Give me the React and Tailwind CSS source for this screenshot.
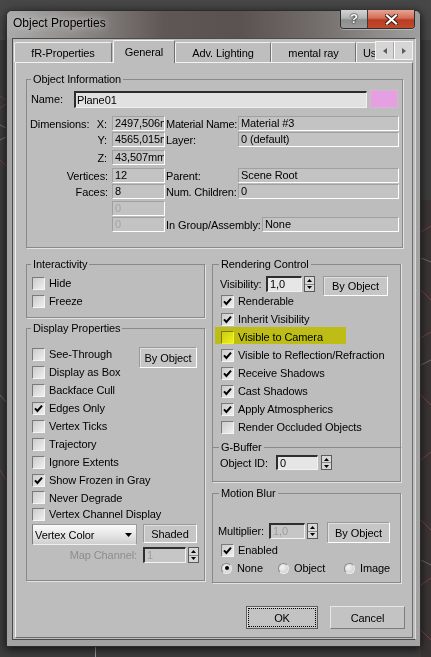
import React from "react";

const font = "font-['Liberation_Sans',Arial,sans-serif]";

function Check({ checked }) {
  return (
    <span className="flex h-[13px] w-[13px] shrink-0 items-center justify-center border border-t-[#7a7a7a] border-l-[#7a7a7a] border-b-[#f4f4f4] border-r-[#f4f4f4] bg-[linear-gradient(135deg,#cbcbcb_0%,#efefef_100%)]">
      {checked && (
        <svg width="9" height="9" viewBox="0 0 9 9">
          <path d="M1 4.3 L3.4 7 L8 1.6" fill="none" stroke="#000" strokeWidth="2" />
        </svg>
      )}
    </span>
  );
}

function CheckRow({ checked, label, cls }) {
  return (
    <div className={`flex items-center gap-[4px] whitespace-nowrap ${cls}`}>
      <Check checked={checked} />
      <span>{label}</span>
    </div>
  );
}

function Arrows({ cls }) {
  return (
    <span className={`flex w-[11px] shrink-0 flex-col border border-[#5a5a5a] bg-[#d8d8d8] ${cls}`}>
      <span className="flex flex-1 items-center justify-center border-b border-[#8a8a8a]">
        <svg width="5" height="3" viewBox="0 0 5 3">
          <path d="M2.5 0 L5 3 L0 3 Z" fill="#000" />
        </svg>
      </span>
      <span className="flex flex-1 items-center justify-center">
        <svg width="5" height="3" viewBox="0 0 5 3">
          <path d="M0 0 L5 0 L2.5 3 Z" fill="#000" />
        </svg>
      </span>
    </span>
  );
}

function SpinField({ children, cls, disabled }) {
  return (
    <span
      className={`flex shrink-0 items-center overflow-hidden whitespace-nowrap border-t-2 border-l-2 border-b border-r border-t-[#2e2e2e] border-l-[#2e2e2e] border-b-[#f2f2f2] border-r-[#f2f2f2] pl-[2px] leading-none ${
        disabled ? "bg-[#c6c6c6] text-[#9c9c9c]" : "bg-[#e6e6e6] text-black"
      } ${cls}`}
    >
      {children}
    </span>
  );
}

function Btn({ children, cls }) {
  return (
    <span
      className={`flex shrink-0 items-center justify-center border border-t-[#9a9a9a] border-l-[#9a9a9a] border-b-white border-r-white bg-[#c6c6c6] shadow-[inset_1px_1px_0_#e0e0e0] ${cls}`}
    >
      {children}
    </span>
  );
}

function Radio({ on }) {
  return (
    <span className="flex h-[11px] w-[11px] shrink-0 items-center justify-center rounded-full border border-t-[#8a8a8a] border-l-[#8a8a8a] border-b-[#ececec] border-r-[#ececec] bg-[radial-gradient(circle_at_35%_35%,#f6f6f6,#c6c6c6)]">
      {on && <span className="h-[4px] w-[4px] rounded-full bg-black" />}
    </span>
  );
}

function Group({ title, cls, lcls, children }) {
  return (
    <fieldset className={`border border-[#898989] ${cls}`}>
      <legend className={`px-[2px] text-[11px] leading-[14px] ${lcls}`}>{title}</legend>
      {children}
    </fieldset>
  );
}

function InfoField({ children, cls, dim }) {
  return (
    <div
      className={`flex h-[15px] shrink-0 items-center overflow-hidden whitespace-nowrap border border-t-[#a0a0a0] border-l-[#a0a0a0] border-b-white border-r-white bg-[#c3c3c3] pl-[2px] leading-none ${
        dim ? "text-[#a4a4a4]" : "text-black"
      } ${cls}`}
    >
      {children}
    </div>
  );
}

function Tab({ children, cls }) {
  return (
    <div
      className={`mb-px flex h-[20px] shrink-0 items-center justify-center whitespace-nowrap rounded-t-[2px] border-t border-l border-r border-t-[#f0f0f0] border-l-[#f0f0f0] border-r-[#727272] bg-[#bebebe] ${cls}`}
    >
      {children}
    </div>
  );
}

function Backdrop() {
  return (
    <svg className="absolute left-0 top-0" width="431" height="657" viewBox="0 0 431 657">
      <rect x="0" y="0" width="431" height="657" fill="#3d3d3d" />
      <rect x="0" y="0" width="431" height="40" fill="#474747" />
      <rect x="421" y="200" width="10" height="457" fill="#3b3434" />
      <g stroke="#8c4646" strokeWidth="0.8" fill="none">
        <line x1="0" y1="96" x2="6" y2="100" />
        <line x1="0" y1="108" x2="6" y2="104" />
        <line x1="0" y1="160" x2="6" y2="166" />
        <line x1="0" y1="470" x2="6" y2="480" />
        <line x1="421" y1="232" x2="431" y2="226" />
        <line x1="421" y1="290" x2="431" y2="300" />
        <line x1="421" y1="338" x2="431" y2="332" />
        <line x1="421" y1="395" x2="431" y2="405" />
        <line x1="421" y1="460" x2="431" y2="452" />
        <line x1="421" y1="520" x2="431" y2="530" />
        <line x1="421" y1="585" x2="431" y2="578" />
        <line x1="421" y1="630" x2="431" y2="640" />
      </g>
      <g stroke="#bcbcbc" strokeWidth="0.6" fill="none" opacity="0.7">
        <line x1="0" y1="125" x2="6" y2="128" />
        <line x1="0" y1="140" x2="6" y2="137" />
        <line x1="0" y1="395" x2="6" y2="402" />
        <line x1="421" y1="258" x2="431" y2="262" />
        <line x1="421" y1="365" x2="431" y2="360" />
        <line x1="421" y1="560" x2="431" y2="565" />
      </g>
      <line x1="95.5" y1="646" x2="95.5" y2="657" stroke="#8e9aa6" strokeWidth="1" />
    </svg>
  );
}

export default function App() {
  return (
    <div className={`relative h-[657px] w-[431px] overflow-hidden bg-[#3e3e3e] text-[11px] leading-[14px] tracking-[-0.1px] text-black ${font}`}>
      <Backdrop />
      <div className="relative ml-[6px] mt-[10px] flex h-[637px] w-[415px] flex-col rounded-t-[6px] border border-[#2c2c2c] bg-[#a3a3a3] shadow-[0_2px_10px_rgba(0,0,0,0.75)]">
        {/* title bar */}
        <div className="flex h-[27px] shrink-0 items-start justify-between rounded-t-[5px] bg-[linear-gradient(90deg,#aaaaaa_0%,#8e8a88_17%,#5f5755_38%,#5a5250_56%,#716b69_74%,#8f8c8b_90%,#9f9f9f_100%)]">
          <span className="ml-[6px] mt-[5px] text-[12px] leading-[15px] tracking-normal [text-shadow:0_0_6px_#d4d4d4,0_0_12px_#c4c4c4]">
            Object Properties
          </span>
          <div className="-mt-px mr-[5px] flex h-[19px] rounded-b-[4px] border border-t-0 border-[#2e2e2e] shadow-[0_1px_0_rgba(255,255,255,0.35)]">
            <span className="flex w-[27px] items-center justify-center rounded-bl-[3px] border-r border-[#3a3a3a] bg-[linear-gradient(180deg,#d4d4d4_0%,#b4b4b4_45%,#8e8e8e_55%,#9a9a9a_100%)] pb-px text-[13px] font-bold leading-none text-white [text-shadow:0_0_2px_#000,0_0_1px_#000]">
              ?
            </span>
            <span className="flex w-[46px] items-center justify-center rounded-br-[3px] bg-[linear-gradient(180deg,#e8a495_0%,#d36e58_45%,#b83c22_55%,#c24a2c_100%)]">
              <svg width="13" height="11" viewBox="0 0 13 11">
                <path d="M2 1.5 L11 9.5 M11 1.5 L2 9.5" stroke="#3a1a12" strokeWidth="4" strokeLinecap="square" />
                <path d="M2 1.5 L11 9.5 M11 1.5 L2 9.5" stroke="#ffffff" strokeWidth="2.2" strokeLinecap="square" />
              </svg>
            </span>
          </div>
        </div>

        {/* client */}
        <div className="ml-[5px] mr-[4px] flex h-[602px] flex-col border border-[#4c4c4c] border-r-[#dadada] bg-[#bdbdbd]">
          {/* tabs */}
          <div className="flex h-[23px] shrink-0 items-start">
            <div className="relative z-10 flex h-[24px] w-[362px] items-end overflow-hidden">
              <Tab cls="ml-[1px] w-[98px]">fR-Properties</Tab>
              <div className="ml-[1px] flex h-[23px] w-[62px] shrink-0 items-center justify-center rounded-t-[2px] border-t border-l border-r border-t-[#f4f4f4] border-l-[#f4f4f4] border-r-[#6e6e6e] bg-[#bdbdbd]">
                General
              </div>
              <Tab cls="w-[96px]">Adv. Lighting</Tab>
              <Tab cls="w-[85px]">mental ray</Tab>
              <Tab cls="w-[70px] justify-start pl-[6px]">User Defined</Tab>
            </div>
            <div className="mt-[2px] flex h-[19px] w-[38px] shrink-0 border border-[#f2f2f2] bg-[#d6d6d6]">
              <span className="flex flex-1 items-center justify-center border-r border-[#a8a8a8]">
                <svg width="4" height="6" viewBox="0 0 4 6">
                  <path d="M4 0 L4 6 L0 3 Z" fill="#5a5a5a" />
                </svg>
              </span>
              <span className="flex flex-1 items-center justify-center border-l border-white">
                <svg width="4" height="6" viewBox="0 0 4 6">
                  <path d="M0 0 L0 6 L4 3 Z" fill="#5a5a5a" />
                </svg>
              </span>
            </div>
          </div>

          {/* panel */}
          <div className="ml-[2px] h-[576px] w-[398px] shrink-0 border border-t-[#f2f2f2] border-l-[#f2f2f2] border-b-[#6c6c6c] border-r-[#6c6c6c] pl-[10px]">
            {/* Object Information */}
            <Group title="Object Information" cls="mt-[9px] w-[377px] pb-[15px] shadow-[1px_1px_0_#e2e2e2]" lcls="ml-[4px]">
              <div className="mt-[4px] flex h-[18px] items-end">
                <div className="w-[47px] self-center pl-[4px]">Name:</div>
                <div className="flex h-[17px] w-[293px] items-center border-t-2 border-l-2 border-b border-r border-t-[#2b2b2b] border-l-[#2b2b2b] border-b-[#efefef] border-r-[#efefef] bg-[#e1e1e1] pl-[1px]">
                  Plane01
                </div>
                <div className="ml-[3px] h-[18px] w-[28px] border border-[#d7b4d3] bg-[#e69fe1]" />
              </div>

              <div className="mt-[8px] flex h-[15px] items-center">
                <div className="flex w-[85px] justify-between pl-[3px] pr-[5px]">
                  <span>Dimensions:</span>
                  <span>X:</span>
                </div>
                <InfoField cls="w-[53px]">2497,506mm</InfoField>
                <div className="w-[73px] whitespace-nowrap pl-[1px] tracking-[-0.25px]">Material Name:</div>
                <InfoField cls="w-[161px]">Material #3</InfoField>
              </div>

              <div className="mt-[1px] flex h-[15px] items-center">
                <div className="w-[85px] pr-[5px] text-right">Y:</div>
                <InfoField cls="w-[53px]">4565,015mm</InfoField>
                <div className="w-[73px] pl-[1px]">Layer:</div>
                <InfoField cls="w-[161px]">0 (default)</InfoField>
              </div>

              <div className="mt-[3px] flex h-[15px] items-center">
                <div className="w-[85px] pr-[5px] text-right">Z:</div>
                <InfoField cls="w-[53px]">43,507mm</InfoField>
              </div>

              <div className="mt-[3px] flex h-[15px] items-center">
                <div className="w-[85px] pr-[4px] text-right">Vertices:</div>
                <InfoField cls="w-[53px]">12</InfoField>
                <div className="w-[73px] pl-[1px]">Parent:</div>
                <InfoField cls="w-[161px]">Scene Root</InfoField>
              </div>

              <div className="mt-[1px] flex h-[15px] items-center">
                <div className="w-[85px] pr-[4px] text-right">Faces:</div>
                <InfoField cls="w-[53px]">8</InfoField>
                <div className="w-[73px] whitespace-nowrap pl-[1px] tracking-[-0.2px]">Num. Children:</div>
                <InfoField cls="w-[161px]">0</InfoField>
              </div>

              <div className="mt-[2px] flex h-[15px] items-center">
                <div className="w-[85px]" />
                <InfoField cls="w-[53px]" dim>
                  0
                </InfoField>
              </div>

              <div className="mt-[1px] flex h-[15px] items-center">
                <div className="w-[85px]" />
                <InfoField cls="w-[53px]" dim>
                  0
                </InfoField>
                <div className="w-[97px] whitespace-nowrap pl-[1px]">In Group/Assembly:</div>
                <InfoField cls="w-[137px]">None</InfoField>
              </div>
            </Group>

            {/* columns */}
            <div className="mt-[9px] flex items-start gap-[7px]">
              {/* left */}
              <div className="flex w-[179px] flex-col">
                <Group title="Interactivity" cls="w-[179px] pb-[7px] pl-[5px] shadow-[1px_1px_0_#e2e2e2]" lcls="-ml-px">
                  <CheckRow cls="mt-[3px] h-[18px]" label="Hide" />
                  <CheckRow cls="h-[18px]" label="Freeze" />
                </Group>

                <Group title="Display Properties" cls="mt-[3px] w-[179px] pb-[17px] pl-[5px] shadow-[1px_1px_0_#e2e2e2]" lcls="-ml-px">
                  <div className="mt-[10px] flex h-[18px] items-start justify-between pr-[7px]">
                    <CheckRow cls="h-[18px]" label="See-Through" />
                    <Btn cls="mt-[2px] h-[21px] w-[58px]">By Object</Btn>
                  </div>
                  <CheckRow cls="h-[18px]" label="Display as Box" />
                  <CheckRow cls="h-[18px]" label="Backface Cull" />
                  <CheckRow cls="h-[18px]" label="Edges Only" checked />
                  <CheckRow cls="h-[18px]" label="Vertex Ticks" />
                  <CheckRow cls="h-[18px]" label="Trajectory" />
                  <CheckRow cls="h-[18px]" label="Ignore Extents" />
                  <CheckRow cls="h-[18px]" label="Show Frozen in Gray" checked />
                  <CheckRow cls="h-[17px]" label="Never Degrade" />
                  <CheckRow cls="h-[16px]" label="Vertex Channel Display" />

                  <div className="mt-[2px] flex h-[21px] items-start">
                    <div className="flex h-[21px] w-[105px] items-center justify-between border border-t-[#9c9c9c] border-l-[#7a7a7a] border-b-[#f0f0f0] border-r-[#9a9a9a] bg-[linear-gradient(180deg,#fbfbfb_0%,#e6e6e6_50%,#cfcfcf_100%)] pl-[2px] pr-[4px]">
                      <span>Vertex Color</span>
                      <svg width="7" height="4" viewBox="0 0 7 4">
                        <path d="M0 0 L7 0 L3.5 4 Z" fill="#000" />
                      </svg>
                    </div>
                    <Btn cls="ml-[6px] h-[19px] w-[54px]">Shaded</Btn>
                  </div>

                  <div className="mt-[2px] flex h-[16px] items-center">
                    <div className="w-[105px] text-right text-[#8d8d8d]">Map Channel:</div>
                    <SpinField cls="ml-[6px] h-[16px] w-[43px]" disabled>
                      1
                    </SpinField>
                    <Arrows cls="ml-[2px] h-[16px]" />
                  </div>
                </Group>
              </div>

              {/* right */}
              <div className="flex w-[189px] flex-col">
                <Group title="Rendering Control" cls="w-[189px] border-b-0 pb-[11px] pl-[7px] shadow-[1px_0_0_#e2e2e2]" lcls="-ml-px">
                  <div className="mt-[5px] flex h-[16px] items-start">
                    <span className="flex h-[16px] w-[46px] items-center">Visibility:</span>
                    <SpinField cls="h-[16px] w-[36px]">1,0</SpinField>
                    <Arrows cls="ml-[2px] h-[16px]" />
                    <Btn cls="ml-[8px] h-[20px] w-[65px]">By Object</Btn>
                  </div>
                  <CheckRow cls="ml-[1px] h-[18px]" label="Renderable" checked />
                  <CheckRow cls="ml-[1px] h-[18px]" label="Inherit Visibility" checked />
                  <div className="relative h-[18px]">
                    <CheckRow cls="ml-[1px] h-[18px]" label="Visible to Camera" />
                    <span className="absolute left-[-5px] top-[-1px] h-[17px] w-[131px] bg-[#ffff1c] mix-blend-multiply" />
                  </div>
                  <CheckRow cls="ml-[1px] h-[18px]" label="Visible to Reflection/Refraction" checked />
                  <CheckRow cls="ml-[1px] h-[18px]" label="Receive Shadows" checked />
                  <CheckRow cls="ml-[1px] h-[18px]" label="Cast Shadows" checked />
                  <CheckRow cls="ml-[1px] h-[18px]" label="Apply Atmospherics" checked />
                  <CheckRow cls="ml-[1px] h-[18px]" label="Render Occluded Objects" />
                </Group>

                <Group title="G-Buffer" cls="relative -mt-[7px] w-[189px] pb-[11px] pl-[7px] shadow-[1px_1px_0_#e2e2e2]" lcls="-ml-px">
                  <div className="mt-[1px] flex h-[15px] items-center">
                    <span className="w-[56px]">Object ID:</span>
                    <SpinField cls="h-[15px] w-[42px]">0</SpinField>
                    <Arrows cls="ml-[3px] h-[15px]" />
                  </div>
                </Group>

                <Group title="Motion Blur" cls="mt-[4px] w-[189px] pb-[5px] pl-[5px] shadow-[1px_1px_0_#e2e2e2]" lcls="ml-px">
                  <div className="mt-[22px] flex h-[19px] items-start">
                    <span className="mt-[1px] flex h-[16px] w-[51px] items-center">Multiplier:</span>
                    <SpinField cls="mt-[1px] h-[16px] w-[36px]" disabled>
                      1,0
                    </SpinField>
                    <Arrows cls="ml-[2px] mt-[1px] h-[16px]" />
                    <Btn cls="ml-[9px] h-[21px] w-[63px]">By Object</Btn>
                  </div>
                  <CheckRow cls="ml-[3px] h-[18px]" label="Enabled" checked />
                  <div className="ml-[3px] flex h-[18px] items-center">
                    <span className="flex w-[57px] items-center gap-[5px]">
                      <Radio on />
                      None
                    </span>
                    <span className="flex w-[66px] items-center gap-[5px]">
                      <Radio />
                      Object
                    </span>
                    <span className="flex items-center gap-[5px]">
                      <Radio />
                      Image
                    </span>
                  </div>
                </Group>
              </div>
            </div>

            {/* buttons */}
            <div className="mt-[23px] flex justify-end gap-[12px] pr-[7px]">
              <span className="flex h-[23px] w-[72px] items-center justify-center border border-[#5e5e5e] bg-[#c3c3c3] shadow-[inset_1px_1px_0_#dcdcdc] outline-1 outline-dotted outline-black -outline-offset-3">
                OK
              </span>
              <span className="flex h-[23px] w-[75px] items-center justify-center border border-t-[#e6e6e6] border-l-[#e6e6e6] border-b-[#7c7c7c] border-r-[#7c7c7c] bg-[#c3c3c3]">
                Cancel
              </span>
            </div>
          </div>
        </div>
      </div>
    </div>
  );
}
